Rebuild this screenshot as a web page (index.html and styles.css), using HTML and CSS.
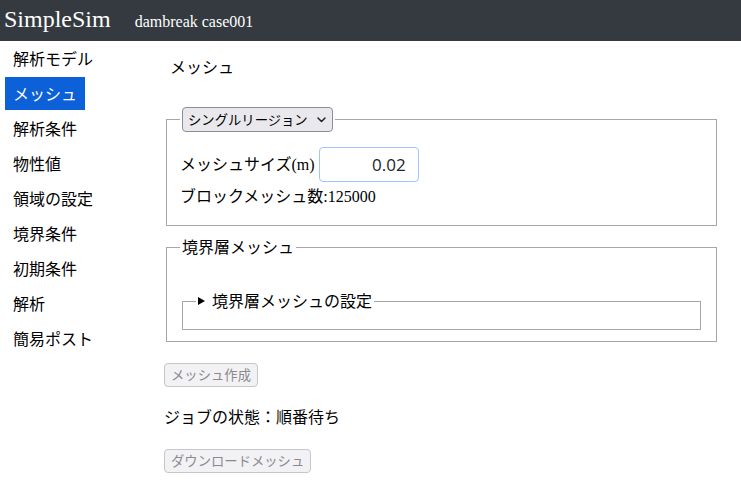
FILE: index.html
```html
<!DOCTYPE html>
<html lang="ja">
<head>
<meta charset="utf-8">
<title>SimpleSim</title>
<link rel="stylesheet" href="styles.css">
</head>
<body>
<header class="navbar">
  <span class="brand">SimpleSim</span>
  <span class="case-name">dambreak case001</span>
</header>
<div class="layout">
  <nav class="sidebar">
    <a class="nav-item">解析モデル</a>
    <a class="nav-item active">メッシュ</a>
    <a class="nav-item">解析条件</a>
    <a class="nav-item">物性値</a>
    <a class="nav-item">領域の設定</a>
    <a class="nav-item">境界条件</a>
    <a class="nav-item">初期条件</a>
    <a class="nav-item">解析</a>
    <a class="nav-item">簡易ポスト</a>
  </nav>
  <main class="main">
    <div class="page-title">メッシュ</div>
    <fieldset class="group">
      <legend class="group-legend">
        <label class="select-wrap">
          <select class="select"><option>シングルリージョン</option></select>
          <svg class="chevron" width="9" height="6" viewBox="0 0 9 6"><path d="M1 1 L4.5 4.5 L8 1" fill="none" stroke="#222" stroke-width="1.5" stroke-linecap="round" stroke-linejoin="round"/></svg>
        </label>
      </legend>
      <div class="field-row">
        <span class="field-label">メッシュサイズ(m)</span>
        <input class="num-input" type="text" value="0.02">
      </div>
      <div class="info-line">ブロックメッシュ数:125000</div>
    </fieldset>
    <fieldset class="group group-second">
      <legend class="group-legend">境界層メッシュ</legend>
      <div class="spacer"></div>
      <fieldset class="group inner">
        <legend class="group-legend summary"><svg class="marker" width="8" height="9" viewBox="0 0 8 9"><path d="M0 0 L8 4.5 L0 9 Z" fill="#000"/></svg>境界層メッシュの設定</legend>
      </fieldset>
    </fieldset>
    <button class="btn first" disabled>メッシュ作成</button>
    <p class="status">ジョブの状態：順番待ち</p>
    <button class="btn" disabled>ダウンロードメッシュ</button>
  </main>
</div>
</body>
</html>
```
FILE: styles.css
```css
html, body {
  margin: 0;
  padding: 0;
  background: #fff;
}
body {
  font-family: "Liberation Serif", "Noto Sans CJK JP", serif;
  font-size: 16px;
  line-height: 23px;
  color: #000;
}
.navbar {
  height: 41px;
  background: #343a40;
  color: #fff;
  display: flex;
  align-items: baseline;
  padding: 0 0 0 4px;
  box-sizing: border-box;
}
.brand {
  font-size: 24px;
  line-height: 38px;
  margin-right: 24px;
}
.case-name {
  font-size: 16px;
}
.layout {
  display: grid;
  grid-template-columns: 164px 1fr;
}
.sidebar {
  display: flex;
  flex-direction: column;
  align-items: flex-start;
  gap: 2px;
  padding: 1px 0 0 5px;
}
.nav-item {
  display: block;
  padding: 5px 8px;
  line-height: 23px;
  color: #000;
  text-decoration: none;
  font-family: "Noto Sans CJK JP", sans-serif;
}
.nav-item.active {
  background: #0c60d8;
  color: #fff;
}
.main {
  padding: 13.5px 22px 0 0;
}
.page-title {
  margin: 0 0 29.5px 6px;
  font-family: "Noto Sans CJK JP", sans-serif;
}
.group {
  margin: 0 2px;
  padding: 5.6px 13px 11px;
  border: 1px solid #a6a6a6;
  min-width: 0;
}
.group-legend {
  padding: 0 2px;
  line-height: 23px;
}
.group-second {
  margin-top: 10px;
}
.spacer {
  height: 25.5px;
}
.inner {
  margin: 0 2px;
}
.summary {
  display: flex;
  align-items: center;
}
.marker {
  width: 7px;
  height: 8px;
  margin-right: 7px;
}
.select-wrap {
  display: inline-flex;
  align-items: center;
  height: 25px;
  box-sizing: border-box;
  border: 1px solid #8d8d95;
  border-radius: 4px;
  background: #e9e9ed;
  padding: 0 6px 0 5px;
  vertical-align: top;
}
.select {
  appearance: none;
  -webkit-appearance: none;
  border: 0;
  background: transparent;
  padding: 0;
  margin: 0 9px 0 0;
  font-family: "Noto Sans CJK JP", sans-serif;
  font-size: 13.33px;
  line-height: 20px;
  color: #000;
  outline: none;
}
.chevron {
  display: block;
}
.field-row {
  display: flex;
  align-items: center;
  gap: 4px;
  margin-top: 9px;
  height: 35px;
}
.num-input {
  width: 100px;
  height: 35px;
  box-sizing: border-box;
  border: 1px solid #9ec5fe;
  border-radius: 4px;
  padding: 0 12px;
  text-align: right;
  font-family: "Open Sans", "Noto Sans", sans-serif;
  font-size: 17px;
  color: #212529;
  outline: none;
  background: #fff;
}
.info-line {
  margin: 3px 0 6px;
}
.btn {
  display: block;
  height: 24px;
  box-sizing: border-box;
  padding: 0 6px;
  border: 1px solid #c6c6cb;
  border-radius: 4px;
  background: #f2f2f5;
  color: #8a8a8e;
  font-family: "Noto Sans CJK JP", sans-serif;
  font-size: 13.33px;
  line-height: 20px;
}
.btn.first {
  margin-top: 21px;
}
.status {
  margin: 17.5px 0 21.5px;
  font-family: "Noto Sans CJK JP", sans-serif;
}
```
